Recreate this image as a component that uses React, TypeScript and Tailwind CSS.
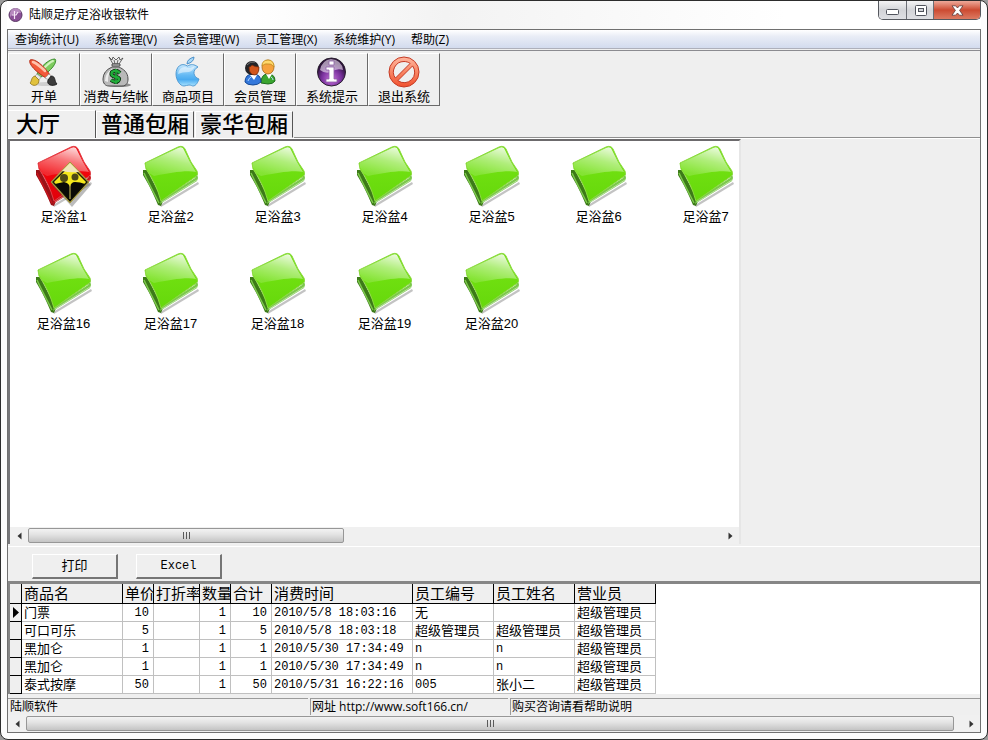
import { useState } from "react";
import type { ReactNode } from "react";

const menus = ["查询统计(U)", "系统管理(V)", "会员管理(W)", "员工管理(X)", "系统维护(Y)", "帮助(Z)"];

const rooms = ["大厅", "普通包厢", "豪华包厢"];

const seatRows = [
  [1, 2, 3, 4, 5, 6, 7],
  [16, 17, 18, 19, 20],
];

const columns = ["商品名", "单价", "打折率", "数量", "合计", "消费时间", "员工编号", "员工姓名", "营业员"];

const records = [
  { name: "门票", price: 10, count: 1, total: 10, time: "2010/5/8 18:03:16", code: "无", staff: "", clerk: "超级管理员" },
  { name: "可口可乐", price: 5, count: 1, total: 5, time: "2010/5/8 18:03:18", code: "超级管理员", staff: "超级管理员", clerk: "超级管理员" },
  { name: "黑加仑", price: 1, count: 1, total: 1, time: "2010/5/30 17:34:49", code: "n", staff: "n", clerk: "超级管理员" },
  { name: "黑加仑", price: 1, count: 1, total: 1, time: "2010/5/30 17:34:49", code: "n", staff: "n", clerk: "超级管理员" },
  { name: "泰式按摩", price: 50, count: 1, total: 50, time: "2010/5/31 16:22:16", code: "005", staff: "张小二", clerk: "超级管理员" },
];

const tools: { label: string; icon: ReactNode }[] = [
  { label: "开单", icon: <BrushIcon /> },
  { label: "消费与结帐", icon: <MoneyBagIcon /> },
  { label: "商品项目", icon: <AppleIcon /> },
  { label: "会员管理", icon: <UsersIcon /> },
  { label: "系统提示", icon: <InfoIcon /> },
  { label: "退出系统", icon: <ForbidIcon /> },
];

export default function App() {
  const [room, setRoom] = useState("大厅");
  const [current, setCurrent] = useState(0);

  return (
    <div className="h-screen min-h-[480px] bg-[#9a9a9a] font-['Liberation_Sans','Noto_Sans_CJK_SC',sans-serif] text-xs text-black">
      <div className="flex h-full flex-col overflow-hidden rounded-lg border border-[#2d2d2d] bg-[#fcfcfc] px-1.5 pb-1.5">
        {/* TITLE BAR */}
        <header className="flex h-7 shrink-0 items-start justify-between bg-linear-to-r from-white from-25% via-[#f3f3f3] via-45% to-white to-80%">
          <div className="flex items-center gap-1.5 pt-1">
            <LogoIcon />
            <h1 className="font-['Open_Sans','Noto_Sans_CJK_SC',sans-serif] text-xs leading-5">陆顺足疗足浴收银软件</h1>
          </div>

          <div className="flex h-[19px] overflow-hidden rounded-b-[5px] border border-t-0 border-[#55585e]">
            <button aria-label="最小化" className="flex w-7 items-center justify-center border-r border-[#6b6e75] bg-linear-to-b from-[#f4f4f5] via-[#d3d4d8] to-[#dedfe3] pt-1">
              <svg width="13" height="6" viewBox="0 0 13 6">
                <rect x="0.5" y="0.5" width="12" height="5" rx="1" fill="#fff" stroke="#50535c" />
              </svg>
            </button>
            <button aria-label="最大化" className="flex w-[27px] items-center justify-center border-r border-[#6b6e75] bg-linear-to-b from-[#f4f4f5] via-[#d3d4d8] to-[#dedfe3]">
              <svg width="13" height="11" viewBox="0 0 13 11">
                <rect x="1.5" y="0.5" width="11" height="10" rx="1" fill="#fff" stroke="#50535c" />
                <rect x="4.5" y="3.5" width="5" height="3" fill="#d3d4d8" stroke="#50535c" />
              </svg>
            </button>
            <button aria-label="关闭" className="flex w-[46px] items-center justify-center bg-linear-to-b from-[#eda99a] via-[#cc4a31] via-50% to-[#dc7a62]">
              <svg width="13" height="11" viewBox="0 0 13 11">
                <path d="M1 .8h3.600l1.900 2.200L8.400.8H12L8.600 5.400 12 10.200H8.400L6.500 8l-1.900 2.200H1l3.400-4.800z" fill="#fff" stroke="#5d3a3a" strokeWidth=".8" />
              </svg>
            </button>
          </div>
        </header>

        <div className="flex min-h-0 flex-1 flex-col border border-[#707070] bg-[#efefef]">
          {/* MENU */}
          <nav className="flex h-[19px] shrink-0 items-center gap-4 border-b border-[#aeb0bb] bg-linear-to-b from-white via-[#e9edf6] via-35% to-[#d3dbee] pl-[7px] font-['Open_Sans','Noto_Sans_CJK_SC',sans-serif]">
            {menus.map((item) => (
              <button key={item} className="pt-0.5 text-xs leading-4 whitespace-nowrap">
                {item}
              </button>
            ))}
          </nav>

          {/* TOOLBAR */}
          <div className="mt-px flex shrink-0 border-t border-[#8b8b90] pt-0.5">
            {tools.map((tool) => (
              <button
                key={tool.label}
                className="flex h-[53px] w-[72px] flex-col items-center border border-t-white border-r-[#6a6a6a] border-b-[#6a6a6a] border-l-white pt-0.5 text-[13px] leading-[17px] whitespace-nowrap"
              >
                {tool.icon}
                {tool.label}
              </button>
            ))}
          </div>

          {/* ROOM TABS */}
          <div role="tablist" className="mt-1 flex h-[29px] shrink-0 items-end border-b border-white">
            {rooms.map((item) => (
              <button
                key={item}
                role="tab"
                aria-selected={room === item}
                onClick={() => setRoom(item)}
                className={
                  room === item
                    ? "h-7 w-[88px] border-t border-r border-t-white border-r-[#555] pl-2 text-left text-[22px] leading-[26px] font-medium"
                    : "mr-px h-[27px] border border-t-white border-r-[#555] border-b-[#efefef] border-l-white px-1 text-[22px] leading-[26px] font-medium"
                }
              >
                {item}
              </button>
            ))}
            <div className="flex-1 border-b border-[#8f8f8f]" />
          </div>

          {/* SEATS */}
          <main className="grid min-h-0 flex-1 grid-cols-[733fr_239fr]">
            <section className="flex min-w-0 flex-col border-2 border-t-[#6c6a6c] border-r-[#e6e6e6] border-b-0 border-l-[#77777a] bg-white">
              <div className="min-h-0 flex-1 overflow-hidden">
                {seatRows.map((row, index) => (
                  <div key={index} className="flex">
                    {row.map((no) => (
                      <button key={no} className="flex h-[107px] w-[107px] shrink-0 flex-col items-center pt-1">
                        <FolderIcon busy={no === 1} />
                        <span className="text-[13px] leading-5">足浴盆{no}</span>
                      </button>
                    ))}
                  </div>
                ))}
              </div>
              <ScrollBar thumb="w-[316px]" />
            </section>
          </main>

          {/* ACTIONS */}
          <div className="mt-0.5 flex shrink-0 gap-[18px] border-t border-white px-6 pt-[7px] pb-0.5">
            {["打印", "Excel"].map((item) => (
              <button
                key={item}
                className={
                  "h-[25px] w-[86px] border-t border-r-2 border-b-2 border-l border-t-white border-r-[#757575] border-b-[#757575] border-l-white " +
                  (item === "Excel" ? "font-['Liberation_Mono',monospace] text-xs" : "text-[13px]")
                }
              >
                {item}
              </button>
            ))}
          </div>

          {/* RECORDS */}
          <div className="shrink-0 overflow-hidden border-t-[3px] border-l-2 border-[#868686] bg-white">
            <table className="w-[646px] table-fixed border-separate border-spacing-0">
              <colgroup>
                <col className="w-3" />
                <col className="w-[101px]" />
                <col className="w-[31px]" />
                <col className="w-[46px]" />
                <col className="w-[31px]" />
                <col className="w-[41px]" />
                <col className="w-[141px]" />
                <col className="w-[81px]" />
                <col className="w-[81px]" />
                <col className="w-[81px]" />
              </colgroup>
              <thead>
                <tr className="h-5 bg-[#efefef]">
                  <th className="border-r border-b border-black p-0" />
                  {columns.map((item) => (
                    <th key={item} className="overflow-hidden border-r border-b border-black p-0 pl-0.5 text-left text-[15px] leading-[19px] font-normal whitespace-nowrap">
                      {item}
                    </th>
                  ))}
                </tr>
              </thead>
              <tbody>
                {records.map((item, index) => (
                  <tr key={index} onClick={() => setCurrent(index)} className="h-[18px]">
                    <td className="border-r border-b border-black bg-[#efefef] p-0">
                      {current === index && (
                        <svg width="11" height="11" viewBox="0 0 11 11" className="block">
                          <path d="M3 0l6 5.500-6 5.500z" />
                        </svg>
                      )}
                    </td>
                    <Cell>{item.name}</Cell>
                    <Cell right>{item.price}</Cell>
                    <Cell />
                    <Cell right>{item.count}</Cell>
                    <Cell right>{item.total}</Cell>
                    <Cell mono>{item.time}</Cell>
                    <Cell mono={/^\w+$/.test(item.code)}>{item.code}</Cell>
                    <Cell mono={/^\w+$/.test(item.staff)}>{item.staff}</Cell>
                    <Cell>{item.clerk}</Cell>
                  </tr>
                ))}
              </tbody>
            </table>
          </div>

          {/* STATUS BAR */}
          <footer className="mt-1 flex shrink-0 gap-0.5 font-['Open_Sans','Noto_Sans_CJK_SC',sans-serif] text-xs leading-4 whitespace-nowrap">
            <div className="w-[300px] border-t border-[#9b9b9b] pl-0.5">陆顺软件</div>
            <div className="w-[198px] border-t border-l border-[#9b9b9b] pl-px">网址 http://www.soft166.cn/</div>
            <div className="flex-1 border-t border-l border-[#9b9b9b] pl-px">购买咨询请看帮助说明</div>
          </footer>
          <ScrollBar thumb="mr-2 flex-1" />
        </div>
      </div>
    </div>
  );
}

function Cell({ children, right, mono }: { children?: ReactNode; right?: boolean; mono?: boolean }) {
  return (
    <td
      className={
        "overflow-hidden border-r border-b border-[#c0c0c0] whitespace-nowrap " +
        (right ? "pr-1 text-right " : "pl-0.5 ") +
        (right || mono ? "pt-0.5 font-['Liberation_Mono',monospace] text-xs leading-[15px]" : "text-[13px] leading-[17px]")
      }
    >
      {children}
    </td>
  );
}

function ScrollBar({ thumb }: { thumb: string }) {
  return (
    <div className="flex h-[17px] shrink-0 items-center bg-[#f0f0f0]">
      <button aria-label="向左" className="flex h-4 w-[18px] shrink-0 items-center justify-center">
        <svg width="5" height="8" viewBox="0 0 5 8">
          <path d="M4.500 0.500v7L0.500 4z" fill="#333" />
        </svg>
      </button>
      <div className={"flex h-[15px] items-center justify-center rounded-xs border border-[#979797] bg-linear-to-b from-[#f3f3f3] via-[#e2e2e2] via-45% to-[#c4c4c4] " + thumb}>
        <svg width="9" height="7" viewBox="0 0 9 7">
          <path d="M1.500 0v7M4.500 0v7M7.500 0v7" stroke="#5a5a5a" />
        </svg>
      </div>
      <button aria-label="向右" className="ml-auto flex h-4 w-[18px] shrink-0 items-center justify-center">
        <svg width="5" height="8" viewBox="0 0 5 8">
          <path d="M0.500 0.500v7L4.500 4z" fill="#333" />
        </svg>
      </button>
    </div>
  );
}

function FolderIcon({ busy }: { busy: boolean }) {
  const id = busy ? "red" : "green";
  const c = busy
    ? { body: "#f2060c", low: "#e0000a", back: "#9a1218", edge: "#c4161c", line: "#e04048" }
    : { body: "#70e010", low: "#66d80c", back: "#3c7a18", edge: "#7cc84c", line: "#8cd840" };

  return (
    <svg width="58" height="62" viewBox="0 0 58 62">
      <defs>
        <linearGradient id={id + "Body"} x1="0" y1="0" x2="0" y2="1">
          <stop offset="0.4" stopColor={c.body} />
          <stop offset="1" stopColor={c.low} />
        </linearGradient>
        <linearGradient id={id + "Gloss"} x1="0.85" y1="0" x2="0.4" y2="1">
          <stop offset="0" stopColor="#fff" stopOpacity="0.9" />
          <stop offset=".5" stopColor="#fff" stopOpacity="0.45" />
          <stop offset="1" stopColor="#fff" stopOpacity="0.15" />
        </linearGradient>
      </defs>
      <path d="M18 60L56 37l1 2L19 62z" fill="#888" opacity=".5" />
      <path d="M1 25h4l16 31-2 5-3-1C12 50 6 38 1 30z" fill={c.back} />
      <path d="M2 28c5 11 10 20 15 30" stroke={c.edge} strokeWidth="1.500" fill="none" />
      <path d="M19 55l34-22 2-5 1 5-1 3-37 23z" fill={c.edge} />
      <path d="M20 57l35-22" stroke="#fff" strokeOpacity=".45" fill="none" />
      <path d="M3 18L36 2q5-2 7 2l6 13 6 9q2 4-2 6L19 56Q14 38 4 24z" fill={"url(#" + id + "Body)"} stroke={c.line} />
      <path d="M4 18L36 3q5-2 6 2l6 12 6 10C44 25 28 28 12 31l-5-3-3-6z" fill={"url(#" + id + "Gloss)"} />
      {busy && (
        <g>
          <path d="M37 21l19 19-19 22-20-22z" fill="#555" opacity=".4" />
          <path d="M35 17l19 20-19 21-19-21z" fill="#d8c95c" stroke="#a2963c" />
          <path d="M35 20l17 17-17 19-17-19z" fill="#f4e81c" stroke="#1e1c08" strokeWidth="1.500" />
          <path d="M35 18l9 9q-9 1-17-1z" fill="#f0e6bc" />
          <circle cx="29" cy="33" r="4" fill="#4e4a16" />
          <circle cx="40" cy="32" r="3.500" fill="#4e4a16" />
          <path d="M20 39q4-1 9-2 5 1 6 5 1-5 5-5 5 0 10 2L35 56z" fill="#0a0a06" />
          <path d="M35 40v14" stroke="#d8c95c" />
        </g>
      )}
    </svg>
  );
}

function LogoIcon() {
  return (
    <svg width="16" height="16" viewBox="0 0 16 16">
      <circle cx="8.5" cy="8" r="6.500" fill="#8a4f96" stroke="#5b3865" />
      <path d="M3 7A5.500 5.500 0 0 1 14 6Q8 5 3 10z" fill="#caa3d0" opacity=".7" />
      <path d="M7.500 4v8M5 8h4l2-3" stroke="#f7e9f8" strokeWidth="1.200" fill="none" />
    </svg>
  );
}

function BrushIcon() {
  return (
    <svg width="32" height="32" viewBox="0 0 32 32" className="shrink-0">
      <ellipse cx="18" cy="28" rx="11" ry="2" fill="#bbb" opacity=".6" />
      <path d="M9 18C13 10 21 3 27 3c3 3-4 12-14 18z" fill="#7dcc5e" stroke="#3f8f32" />
      <path d="M16 12c3-3 6-6 9-7" stroke="#d2f3bf" strokeWidth="2" strokeLinecap="round" />
      <path d="M9 18l4 3-2 3-5-3z" fill="#e7e7e7" stroke="#999" strokeWidth=".7" />
      <path d="M7 20c-4 1-3 5-5 7 3 4 9 3 9-3z" fill="#e1c23d" stroke="#8f741e" strokeWidth=".8" />
      <path d="M2 4c5-2 14 6 20 15l-4 3C8 16 0 8 2 4z" fill="#f25a3a" stroke="#b62c18" />
      <path d="M5 6c5 2 8 5 12 9" stroke="#ffc1aa" strokeWidth="2.500" fill="none" strokeLinecap="round" />
      <path d="M21 18l3 3-3 3-4-2z" fill="#f1f1f1" stroke="#999" strokeWidth=".7" />
      <path d="M23 20c5 0 3 5 6 8-4 3-11 1-9-4z" fill="#3c3c3c" stroke="#161616" strokeWidth=".8" />
    </svg>
  );
}

function MoneyBagIcon() {
  return (
    <svg width="32" height="32" viewBox="0 0 32 32" className="shrink-0">
      <ellipse cx="19" cy="29" rx="12" ry="2" fill="#8f8f8f" />
      <path d="M12 11Q3 15 3 23c0 4 2 7 6 7h13c5 0 6-4 6-7 0-7-5-10-9-12z" fill="#b9b9b9" stroke="#4d4d4d" />
      <path d="M12 13Q5 17 5 25l3 1q-1-8 5-12z" fill="#ececec" />
      <path d="M9 1l3 3 1-3 3 3 3-3 1 3 3-2-4 6h-6z" fill="#e9e9e9" stroke="#444" strokeWidth=".8" />
      <path d="M14 4l1 4M18 4l-1 4" stroke="#666" />
      <path d="M12 8h8v2h-8z" fill="#ccc" stroke="#333" strokeWidth=".8" />
      <path d="M20 17q-4-4-8-1-2 4 4 5 5 1 2 4-3 2-7-1" fill="none" stroke="#0a2b0d" strokeWidth="4" />
      <path d="M16 13v15" stroke="#0a2b0d" strokeWidth="3" />
      <path d="M20 17q-4-4-8-1-2 4 4 5 5 1 2 4-3 2-7-1" fill="none" stroke="#22ad3b" strokeWidth="2.500" />
      <path d="M16 13v15" stroke="#22ad3b" strokeWidth="1.500" />
    </svg>
  );
}

function AppleIcon() {
  return (
    <svg width="32" height="32" viewBox="0 0 32 32" className="shrink-0">
      <defs>
        <linearGradient id="apple" x1="0" y1="0" x2="0" y2="1">
          <stop offset="0" stopColor="#c9e8fc" />
          <stop offset=".5" stopColor="#62b9f4" />
          <stop offset=".7" stopColor="#4aabf0" />
          <stop offset="1" stopColor="#a8e2ff" />
        </linearGradient>
      </defs>
      <path d="M15 8q0-5 7-7 0 5-7 7z" fill="#a9d8f8" stroke="#3f88c4" strokeWidth=".9" />
      <path d="M15.500 10C9 6 4 11 4 18c0 6 4 12 8 12 2 0 3-1 5-1s3 1 4 1c3 0 5-4 6-7-6-2-7-9-1-12-4-3-7-3-10.500-1z" fill="url(#apple)" stroke="#4a94ce" strokeWidth=".9" />
      <path d="M6 18q1-7 7-7 3 1 5 1l5-2q-2 5-6 6-7 0-11 2z" fill="#fff" opacity=".5" />
    </svg>
  );
}

function UsersIcon() {
  return (
    <svg width="32" height="32" viewBox="0 0 32 32" className="shrink-0">
      <path d="M17 27q0-9 7-9 7 0 7 7-2 3-7 3z" fill="#3aa52f" stroke="#1c6a1c" />
      <path d="M22 18l3 5 3-5" fill="#fff" />
      <ellipse cx="24" cy="11" rx="6" ry="7" fill="#f6a23d" stroke="#a8681b" strokeWidth=".8" />
      <path d="M18 10q0-6 6-6 6 0 6 7-3-4-6-3-3-1-6 2z" fill="#ffd86b" stroke="#bf8c1f" strokeWidth=".8" />
      <path d="M1 26q0-8 8-8t8 8q-3 3-8 3-6 0-8-3z" fill="#3478db" stroke="#174a96" />
      <path d="M6 19l4 5 3-5" fill="#fff" />
      <circle cx="8" cy="12" r="7" fill="#242428" />
      <path d="M5 11q2 0 3-2 3 2 7 2 0 7-4 8-6 0-6-8z" fill="#d2561d" stroke="#77290b" strokeWidth=".7" />
      <path d="M3 9q3-4 8-3" stroke="#777" fill="none" />
      <path d="M4 25q1-3 3-4M27 21q2 1 2 3" stroke="#b5d8ff" fill="none" />
    </svg>
  );
}

function InfoIcon() {
  return (
    <svg width="32" height="32" viewBox="0 0 32 32" className="shrink-0">
      <defs>
        <radialGradient id="info" cx=".5" cy=".75" r=".6">
          <stop offset="0" stopColor="#c870de" />
          <stop offset=".6" stopColor="#76309a" />
          <stop offset="1" stopColor="#2b1038" />
        </radialGradient>
      </defs>
      <circle cx="15.500" cy="16" r="14" fill="url(#info)" stroke="#2a2130" />
      <path d="M4 14Q6 4 15 3q11 1 12 11-6-2-12 2-6 2-11-2z" fill="#e6d9ec" opacity=".65" />
      <path d="M13 5h5v4h-5zM10 11h8v12h3v3H10v-3h3v-9h-3z" fill="#fff" stroke="#8e5fa6" strokeWidth=".8" />
    </svg>
  );
}

function ForbidIcon() {
  return (
    <svg width="32" height="32" viewBox="0 0 32 32" className="shrink-0">
      <defs>
        <linearGradient id="forbid" x1="0" y1="0" x2="0" y2="1">
          <stop offset="0" stopColor="#ffb7a0" />
          <stop offset=".55" stopColor="#f8805e" />
          <stop offset="1" stopColor="#f0502e" />
        </linearGradient>
      </defs>
      <path
        fillRule="evenodd"
        d="M16 1a15 15 0 1 0 0 30 15 15 0 0 0 0-30zM16 5.500c2.300 0 4.400.7 6.100 1.900L7.400 22.100A10.500 10.500 0 0 1 16 5.500zM24.600 9.900A10.500 10.500 0 0 1 9.900 24.600z"
        fill="url(#forbid)"
        stroke="#c43a24"
      />
    </svg>
  );
}
